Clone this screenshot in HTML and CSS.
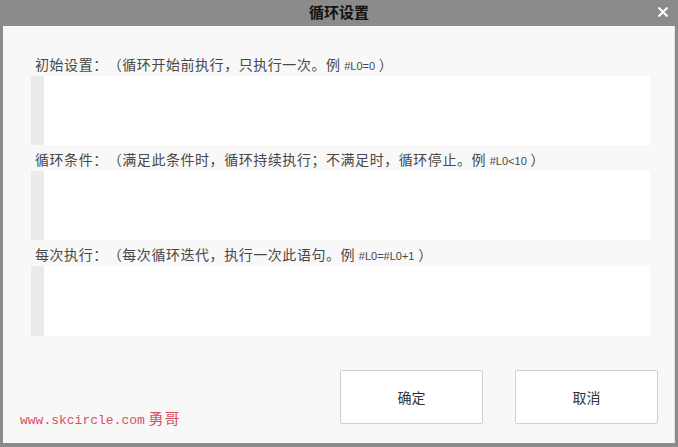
FILE: index.html
```html
<!DOCTYPE html>
<html lang="zh-CN">
<head>
<meta charset="utf-8">
<title>循环设置</title>
<link rel="stylesheet" href="styles.css">
</head>
<body>
<div class="dialog">
  <div class="titlebar">
    <div class="title">循环设置</div>
    <svg class="close" width="12" height="12" viewBox="0 0 12 12"><path d="M1.5 1.5 L10.5 10.5 M10.5 1.5 L1.5 10.5" stroke="#fff" stroke-width="2" fill="none"/></svg>
  </div>
  <div class="content">
    <div class="fields">
      <div class="field">
        <div class="label">初始设置：（循环开始前执行，只执行一次。例 <span class="code">#L0=0</span> ）</div>
        <div class="editor h1"><div class="gutter"></div><div class="area"></div></div>
      </div>
      <div class="field">
        <div class="label">循环条件：（满足此条件时，循环持续执行；不满足时，循环停止。例 <span class="code">#L0&lt;10</span> ）</div>
        <div class="editor h2"><div class="gutter"></div><div class="area"></div></div>
      </div>
      <div class="field">
        <div class="label">每次执行：（每次循环迭代，执行一次此语句。例 <span class="code">#L0=#L0+1</span> ）</div>
        <div class="editor h3"><div class="gutter"></div><div class="area"></div></div>
      </div>
    </div>
    <div class="footer">
      <div class="watermark"><span class="url">www.skcircle.com</span> <span class="name">勇哥</span></div>
      <div class="buttons">
        <button class="btn">确定</button>
        <button class="btn">取消</button>
      </div>
    </div>
  </div>
</div>
</body>
</html>
```
FILE: styles.css
```css
* { box-sizing: border-box; }
html, body { margin: 0; padding: 0; }
body {
  width: 678px;
  height: 447px;
  overflow: hidden;
  font-family: "Noto Sans CJK SC", "Noto Sans", sans-serif;
  background: #8b8b8b;
  text-spacing-trim: space-all;
}
.dialog {
  width: 678px;
  height: 447px;
  background: #8b8b8b;
  padding: 0 3px 4px 3px;
  display: flex;
  flex-direction: column;
}
.titlebar {
  height: 26px;
  position: relative;
  display: flex;
  align-items: center;
  justify-content: center;
}
.title {
  font-size: 15px;
  font-weight: bold;
  color: #111;
  line-height: 26px;
  margin-top: -3px;
}
.close {
  position: absolute;
  right: 6px;
  top: 6px;
}
.content {
  flex: 1;
  background: #f8f8f8;
  border-right: 1px solid #e4e4e4;
  padding: 28px 16px 0 28px;
  display: flex;
  flex-direction: column;
}
.fields {
  display: flex;
  flex-direction: column;
  gap: 4px;
}
.label {
  height: 20px;
  line-height: 20px;
  padding-left: 4px;
  font-size: 14px;
  letter-spacing: 0.55px;
  color: #484848;
  white-space: nowrap;
  text-spacing-trim: space-all;
}
.code {
  font-family: "Liberation Sans", "Noto Sans", sans-serif;
  font-size: 11px;
  letter-spacing: 0;
  color: #484848;
}
.editor {
  margin-top: 2px;
  width: 619px;
  display: flex;
  background: #fff;
}
.h1 { height: 69px; }
.h2 { height: 69px; }
.h3 { height: 70px; }
.gutter {
  width: 13px;
  background: #ebebeb;
}
.area { flex: 1; }
.footer {
  margin-top: 34px;
  display: flex;
  justify-content: space-between;
}
.watermark {
  align-self: flex-end;
  margin-bottom: -7px;
  margin-left: -11px;
  line-height: 20px;
  color: #d9505f;
  white-space: nowrap;
}
.url {
  font-family: "Liberation Mono", monospace;
  font-size: 13px;
}
.name {
  font-family: "Noto Sans CJK SC", sans-serif;
  font-size: 15px;
  letter-spacing: 1px;
}
.buttons {
  display: flex;
  gap: 32px;
}
.btn {
  width: 143px;
  height: 54px;
  background: #fff;
  border: 1px solid #cfcfcf;
  border-radius: 2px;
  font-family: "Noto Sans CJK SC", sans-serif;
  font-size: 14px;
  color: #333;
  padding: 0;
}
```
